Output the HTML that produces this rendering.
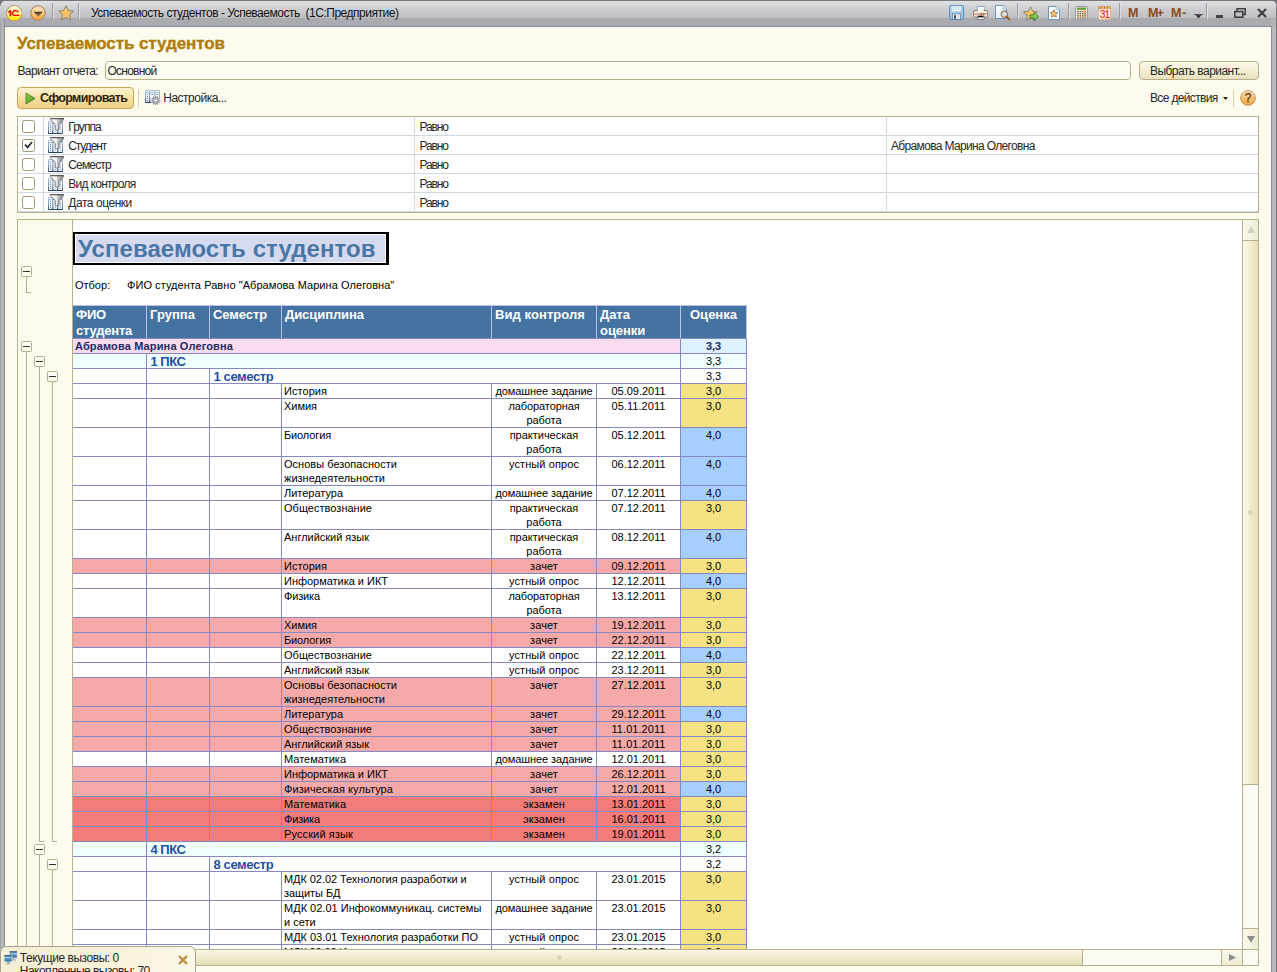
<!DOCTYPE html>
<html><head><meta charset="utf-8"><title>Успеваемость студентов</title>
<style>
html,body{margin:0;padding:0;}
body{width:1277px;height:972px;overflow:hidden;position:relative;background:#fcfbed;font-family:"Liberation Sans",sans-serif;font-size:11px;color:#000;}
div,span{box-sizing:border-box;}
.a{position:absolute;}
.t{position:absolute;white-space:pre;line-height:14px;}
.ui{font-size:11px;color:#1a1a1a;}
.c{position:absolute;overflow:hidden;font-size:11px;line-height:14px;white-space:pre;}
.hl{position:absolute;height:1px;background:#8489c1;}
.vl{position:absolute;width:1px;background:#8489c1;}
.hd{position:absolute;color:#fff;font-weight:bold;font-size:13px;line-height:16px;white-space:pre;}
.gl{position:absolute;background:#b8b08c;}
.mb{position:absolute;width:11px;height:11px;border:1px solid #b5ad88;border-radius:1.5px;background:#fdfcf3;}
.mb:after{content:"";position:absolute;left:1px;top:4px;width:7px;height:1px;background:#3a3420;}
.cb{position:absolute;width:13px;height:13px;border:1px solid #9f9870;border-radius:2.5px;background:#fff;}
</style></head>
<body>
<!-- title bar -->
<div class="a" style="left:0;top:0;width:1277px;height:27px;background:linear-gradient(#77787a 0,#77787a 1px,#dfe0e2 1px,#d6d7d9 5px,#cbcccf 10px,#c3c4c7 15px,#bcbec1 18.5px,#a9abb0 18.5px,#a9abb0 26px);"></div>
<div class="a" style="left:4px;top:26px;width:1268px;height:1px;background:#8c8e93"></div>
<div class="a" style="left:0;top:19px;width:5px;height:953px;background:linear-gradient(90deg,#a3a5a9 0,#a3a5a9 1px,#b5b7bb 1px,#b3b5b9 4px,#8c8e93 4px,#8c8e93 5px);"></div>
<div class="a" style="left:0;top:19px;width:4px;height:8px;background:linear-gradient(90deg,#a3a5a9 0,#a3a5a9 1px,#b1b3b7 1px,#adafb3 4px)"></div>
<div class="a" style="left:1271px;top:19px;width:6px;height:953px;background:linear-gradient(90deg,#8c8e93 0,#8c8e93 1px,#b3b5b9 1px,#b9babe 4px,#b4b5b9 5px,#77787b 5px,#77787b 6px);"></div>
<div class="a" style="left:1271px;top:19px;width:5px;height:7px;background:#aeb0b4"></div>
<div class="a" style="left:0;top:0;width:6px;height:6px;background:radial-gradient(circle at 100% 100%,rgba(112,113,116,0) 5px,#707174 6px)"></div>
<div class="a" style="left:1271px;top:0;width:6px;height:6px;background:radial-gradient(circle at 0 100%,rgba(112,113,116,0) 5px,#707174 6px)"></div>
<div class="a" style="left:1276px;top:6px;width:1px;height:13px;background:#77787b"></div>
<svg class="a" style="left:5.8px;top:4.8px" width="16.6" height="16.6" viewBox="0 0 16.6 16.6"><defs><linearGradient id="l1c" x1="0" y1="0" x2="0" y2="1"><stop offset="0" stop-color="#fffde8"/><stop offset="0.45" stop-color="#fff7a2"/><stop offset="0.7" stop-color="#ffee3a"/><stop offset="1" stop-color="#ffe100"/></linearGradient></defs><circle cx="8.3" cy="8.3" r="7.8" fill="url(#l1c)" stroke="#bd8668" stroke-width="1"/><path d="M2.3 7.4 L4.5 5.6" stroke="#e60000" stroke-width="1.4" fill="none"/><rect x="3.6" y="5.4" width="1.7" height="5.8" fill="#e60000"/><path d="M12.2 7.3 C11.6 5.4 8.6 4.9 7.2 6.6 C6 8 6.3 10 7.9 10.4 H13.5" fill="none" stroke="#e60000" stroke-width="1.4"/><path d="M10.9 7.4 C10.3 6.8 9 6.9 8.5 7.7 C8.1 8.5 8.5 9.2 9.3 9.3" fill="none" stroke="#f0c000" stroke-width="0.5" stroke-dasharray="0.7 0.7"/></svg>
<svg class="a" style="left:30px;top:5.2px" width="16" height="16" viewBox="0 0 16 16"><defs><linearGradient id="db" x1="0" y1="0" x2="0" y2="1"><stop offset="0" stop-color="#fdebd0"/><stop offset="0.5" stop-color="#fac983"/><stop offset="1" stop-color="#f4a23a"/></linearGradient><linearGradient id="dbt" x1="0" y1="0" x2="0" y2="1"><stop offset="0" stop-color="#3e3222"/><stop offset="1" stop-color="#a88658"/></linearGradient></defs><circle cx="8" cy="8" r="7.2" fill="url(#db)" stroke="#b07c48" stroke-width="1"/><path d="M3.7 6.7 H12.7 L8.2 11.8 Z" fill="url(#dbt)"/></svg>
<svg class="a" style="left:57.5px;top:5px" width="16" height="16" viewBox="0 0 16 16"><defs><linearGradient id="st" x1="0" y1="0" x2="0" y2="1"><stop offset="0" stop-color="#fde3a8"/><stop offset="0.55" stop-color="#fbbd58"/><stop offset="1" stop-color="#f7cf8c"/></linearGradient></defs><path d="M8 0.8 L10.2 5.6 L15.4 6.2 L11.5 9.8 L12.6 15 L8 12.4 L3.4 15 L4.5 9.8 L0.6 6.2 L5.8 5.6 Z" fill="url(#st)" stroke="#7d7463" stroke-width="0.9" stroke-linejoin="round"/></svg>
<div class="a" style="left:52px;top:3px;width:1px;height:16px;background:#9b9da2"></div><div class="a" style="left:53px;top:3px;width:1px;height:16px;background:#dcdde0"></div>
<div class="a" style="left:78px;top:3px;width:1px;height:16px;background:#9b9da2"></div><div class="a" style="left:79px;top:3px;width:1px;height:16px;background:#dcdde0"></div>
<div class="t" style="left:91px;top:6px;font-size:12px;line-height:14px;color:#111;letter-spacing:-0.477px;">Успеваемость студентов - Успеваемость  (1С:Предприятие)</div>
<svg class="a" style="left:949px;top:5px" width="15" height="15" viewBox="0 0 15 15"><defs><linearGradient id="sv" x1="0" y1="0" x2="0" y2="1"><stop offset="0" stop-color="#b9d9f1"/><stop offset="1" stop-color="#8fbbe0"/></linearGradient></defs><rect x="0.5" y="0.5" width="14" height="14" rx="1" fill="url(#sv)" stroke="#5b8cb8"/><rect x="3" y="1" width="9" height="5.5" fill="#fff" stroke="#9cc0de" stroke-width="0.6"/><path d="M4 2.8 H11 M4 4.4 H11" stroke="#a6d4e6" stroke-width="0.8"/><rect x="3.5" y="9" width="8" height="5.5" fill="#f4f5f7" stroke="#52708c" stroke-width="0.7"/><rect x="5" y="10.2" width="2" height="3.6" fill="#34495e"/><rect x="7.5" y="9.6" width="3.6" height="4.4" fill="#dfe3e8"/></svg>
<svg class="a" style="left:973px;top:6px" width="15" height="14" viewBox="0 0 15 14"><rect x="4.5" y="0.5" width="6.5" height="5" fill="#fff" stroke="#7fa6cc" stroke-width="0.9"/><path d="M2 4.5 H13.5 Q14.6 4.5 14.6 5.8 V10.2 Q14.6 11.2 13.4 11.2 H2 Q0.6 11.2 0.6 10.2 V5.8 Q0.6 4.5 2 4.5 Z" fill="#f7e9dc" stroke="#8a6a58" stroke-width="0.9"/><rect x="5" y="1.4" width="5.6" height="4" fill="#fbfdff"/><path d="M1.6 8 H13.6" stroke="#b58a6c" stroke-width="1.2"/><rect x="7.6" y="7.3" width="1.5" height="1.5" fill="#e8281c"/><rect x="9.9" y="7.3" width="1.5" height="1.5" fill="#2aa02a"/><rect x="4.4" y="10" width="6.6" height="3.4" fill="#fff" stroke="#6c7078" stroke-width="0.8"/><rect x="5" y="9.8" width="5.4" height="1.6" fill="#111"/></svg>
<svg class="a" style="left:995px;top:5px" width="16" height="16" viewBox="0 0 16 16"><defs><linearGradient id="pv" x1="0" y1="0" x2="1" y2="1"><stop offset="0" stop-color="#fff"/><stop offset="1" stop-color="#d5e6f6"/></linearGradient></defs><path d="M0.5 0.5 H8 L11.5 4 V13.5 H0.5 Z" fill="url(#pv)" stroke="#5e8bb8" stroke-width="0.9"/><path d="M8 0.5 V4 H11.5" fill="#eef5fb" stroke="#7ea3c8" stroke-width="0.7"/><circle cx="9.4" cy="9.2" r="3.1" fill="#cfe3fb" stroke="#a9784a" stroke-width="1.2"/><path d="M11.6 11.6 L14 14.4" stroke="#9a5f2c" stroke-width="2.2" stroke-linecap="round"/></svg>
<div class="a" style="left:1017px;top:3px;width:1px;height:16px;background:#9b9da2"></div><div class="a" style="left:1018px;top:3px;width:1px;height:16px;background:#dcdde0"></div>
<svg class="a" style="left:1023px;top:5.5px" width="16.5" height="16" viewBox="0 0 16.5 16"><defs><linearGradient id="sa" x1="0" y1="0" x2="0" y2="1"><stop offset="0" stop-color="#fde3a8"/><stop offset="0.6" stop-color="#fab850"/><stop offset="1" stop-color="#f7cf8c"/></linearGradient><linearGradient id="ga" x1="0" y1="0" x2="0" y2="1"><stop offset="0" stop-color="#b6e67e"/><stop offset="1" stop-color="#57b02c"/></linearGradient></defs><path d="M8 0.8 L10.2 5.6 L15.4 6.2 L11.5 9.8 L12.6 15 L8 12.4 L3.4 15 L4.5 9.8 L0.6 6.2 L5.8 5.6 Z" fill="url(#sa)" stroke="#7d7463" stroke-width="0.9" stroke-linejoin="round" transform="translate(0,0) scale(0.94)"/><path d="M7 9 H11 V6.3 L15.6 10.6 L11 14.9 V12.2 H7 Z" fill="url(#ga)" stroke="#2f7d1a" stroke-width="0.9" stroke-linejoin="round"/></svg>
<svg class="a" style="left:1048px;top:6px" width="12" height="14" viewBox="0 0 12 14"><path d="M0.5 0.5 H8 L11.5 4 V13.5 H0.5 Z" fill="#fff" stroke="#5e8bb8" stroke-width="0.9"/><path d="M8 0.5 V4 H11.5" fill="#e9f2fb" stroke="#7ea3c8" stroke-width="0.7"/><path d="M8 0.8 L10.2 5.6 L15.4 6.2 L11.5 9.8 L12.6 15 L8 12.4 L3.4 15 L4.5 9.8 L0.6 6.2 L5.8 5.6 Z" fill="#fbc465" stroke="#6e634f" stroke-width="1.3" stroke-linejoin="round" transform="translate(1.6,3.2) scale(0.54)"/></svg>
<div class="a" style="left:1068px;top:3px;width:1px;height:16px;background:#9b9da2"></div><div class="a" style="left:1069px;top:3px;width:1px;height:16px;background:#dcdde0"></div>
<svg class="a" style="left:1075px;top:6px" width="13" height="14" viewBox="0 0 13 14"><defs><linearGradient id="cl" x1="0" y1="0" x2="1" y2="1"><stop offset="0" stop-color="#fef2dc"/><stop offset="1" stop-color="#f8d6a6"/></linearGradient></defs><rect x="0.5" y="0.5" width="12" height="13" rx="0.8" fill="url(#cl)" stroke="#8497aa" stroke-width="0.9"/><rect x="2.2" y="1.9" width="8.6" height="1.7" fill="#5aaa3a" stroke="#3a8424" stroke-width="0.4"/><rect x="2.2" y="5.1" width="1.5" height="1.1" fill="#4a4a48"/><rect x="4.6" y="5.1" width="1.5" height="1.1" fill="#4a4a48"/><rect x="7" y="5.1" width="1.5" height="1.1" fill="#4a4a48"/><rect x="9.4" y="5.1" width="1.5" height="1.1" fill="#e8281c"/><rect x="2.2" y="7.2" width="1.5" height="1.1" fill="#4a4a48"/><rect x="4.6" y="7.2" width="1.5" height="1.1" fill="#4a4a48"/><rect x="7" y="7.2" width="1.5" height="1.1" fill="#4a4a48"/><rect x="9.4" y="7.2" width="1.5" height="1.1" fill="#4a4a48"/><rect x="2.2" y="9.3" width="1.5" height="1.1" fill="#4a4a48"/><rect x="4.6" y="9.3" width="1.5" height="1.1" fill="#4a4a48"/><rect x="7" y="9.3" width="1.5" height="1.1" fill="#4a4a48"/><rect x="9.4" y="9.3" width="1.5" height="1.1" fill="#4a4a48"/><rect x="2.2" y="11.4" width="1.5" height="1.1" fill="#4a4a48"/><rect x="4.6" y="11.4" width="1.5" height="1.1" fill="#4a4a48"/><rect x="7" y="11.4" width="1.5" height="1.1" fill="#4a4a48"/><rect x="9.4" y="11.4" width="1.5" height="1.1" fill="#4a4a48"/></svg>
<svg class="a" style="left:1098px;top:6px" width="13" height="14" viewBox="0 0 13 14"><rect x="0.5" y="0.5" width="12" height="13" fill="#fef4e8" stroke="#d4b890" stroke-width="0.9"/><rect x="0.5" y="0.5" width="12" height="2.4" fill="#eebc70" stroke="#c69758" stroke-width="0.6"/><rect x="2.8" y="1.2" width="1" height="1" fill="#6a4a20"/><rect x="6" y="1.2" width="1" height="1" fill="#6a4a20"/><rect x="9.2" y="1.2" width="1" height="1" fill="#6a4a20"/><text x="6.4" y="12.1" font-family="Liberation Sans" font-size="10" fill="#e8301c" stroke="#e8301c" stroke-width="0.25" text-anchor="middle" letter-spacing="-0.9">31</text></svg>
<div class="a" style="left:1119px;top:3px;width:1px;height:16px;background:#9b9da2"></div><div class="a" style="left:1120px;top:3px;width:1px;height:16px;background:#dcdde0"></div>
<div class="t" style="left:1128px;top:6px;font-size:12.5px;line-height:14px;font-weight:bold;color:#8a4a1e;letter-spacing:-1.413px;">M</div>
<div class="t" style="left:1148px;top:6px;font-size:12.5px;line-height:14px;font-weight:bold;color:#8a4a1e;letter-spacing:-1.713px;">M+</div>
<div class="t" style="left:1171px;top:6px;font-size:12.5px;line-height:14px;font-weight:bold;color:#8a4a1e;letter-spacing:0.924px;">M-</div>
<svg class="a" style="left:1194px;top:14px" width="9" height="5" viewBox="0 0 9 5"><path d="M0 0.5 H9" stroke="#55565a" stroke-width="1"/><path d="M1.5 1 H7.5 L4.5 4.6 Z" fill="#3c3d40"/></svg>
<div class="a" style="left:1206px;top:3px;width:1px;height:16px;background:#9b9da2"></div><div class="a" style="left:1207px;top:3px;width:1px;height:16px;background:#dcdde0"></div>
<div class="a" style="left:1216px;top:15px;width:7px;height:3px;background:#434447"></div>
<svg class="a" style="left:1234.3px;top:8px" width="12" height="10" viewBox="0 0 12 10"><path d="M3 3 V0.8 H11.2 V6.5 H9" fill="none" stroke="#3f4043" stroke-width="1.5"/><rect x="0.8" y="3.6" width="8" height="5.6" fill="none" stroke="#3f4043" stroke-width="1.6"/></svg>
<svg class="a" style="left:1257px;top:8px" width="10" height="10" viewBox="0 0 10 10"><path d="M1 1 L9 9 M9 1 L1 9" stroke="#3f4043" stroke-width="2.2"/></svg>
<div class="t" style="left:17px;top:34px;font-size:17px;line-height:20px;font-weight:bold;color:#b07c0a;letter-spacing:-0.083px;-webkit-text-stroke:0.35px #b07c0a;">Успеваемость студентов</div>
<div class="t" style="left:17.5px;top:64px;font-size:12px;line-height:14px;color:#262626;letter-spacing:-0.642px;">Вариант отчета:</div>
<div class="a" style="left:105px;top:61px;width:1026px;height:19px;border:1px solid #b8b08c;border-radius:4px;background:#fdfcf1"></div>
<div class="t" style="left:107.5px;top:64px;font-size:12px;line-height:14px;color:#262626;letter-spacing:-0.759px;">Основной</div>
<div class="a" style="left:1139px;top:61px;width:120px;height:19px;border:1px solid #b8b08c;border-radius:4px;background:linear-gradient(#fbf8e8,#f3eed4 50%,#e9e2bf)"></div>
<div class="t" style="left:1150px;top:64px;font-size:12px;line-height:14px;color:#262626;letter-spacing:-0.543px;">Выбрать вариант...</div>
<div class="a" style="left:17px;top:87px;width:117px;height:22px;border:1px solid #c9a655;border-radius:4px;background:linear-gradient(#fdf3d3,#f8e0a4 50%,#f0d083)"></div>
<svg class="a" style="left:25px;top:92px" width="11" height="13" viewBox="0 0 11 13"><defs><linearGradient id="pl" x1="0" y1="0" x2="1" y2="1"><stop offset="0" stop-color="#8fd04a"/><stop offset="1" stop-color="#3f9a1c"/></linearGradient></defs><path d="M1 1 L10 6.5 L1 12 Z" fill="url(#pl)" stroke="#4f7f2c" stroke-width="0.9"/></svg>
<div class="t" style="left:40px;top:91px;font-size:12.5px;line-height:14px;font-weight:bold;color:#2a2210;letter-spacing:-0.657px;">Сформировать</div>
<div class="a" style="left:138px;top:90px;width:1px;height:17px;background:#d9cfa8"></div>
<svg class="a" style="left:145px;top:90px" width="16" height="16" viewBox="0 0 16 16"><defs><linearGradient id="sti" x1="0" y1="0" x2="0" y2="1"><stop offset="0" stop-color="#b4c4dc"/><stop offset="0.7" stop-color="#6f8ab0"/><stop offset="1" stop-color="#1c3558"/></linearGradient></defs><rect x="0" y="0" width="15" height="13" rx="1" fill="url(#sti)"/><rect x="1" y="1" width="3" height="1.2" fill="#fff"/><rect x="5.2" y="1" width="3.8" height="1.2" fill="#fff"/><rect x="10.2" y="1" width="3.8" height="1.2" fill="#fff"/><rect x="1" y="3.2" width="3" height="8.6" fill="#f4fcff"/><rect x="5.2" y="3.2" width="3.8" height="8.6" fill="#fff"/><rect x="10.2" y="3.2" width="3.8" height="4" fill="#fff"/><rect x="2" y="4" width="1" height="1" fill="#7276a2"/><rect x="2" y="6" width="1" height="1" fill="#7276a2"/><rect x="2" y="8" width="1" height="1" fill="#7276a2"/><rect x="2" y="10" width="1" height="1" fill="#7276a2"/><rect x="6.4" y="4" width="1.6" height="1" fill="#7276a2"/><rect x="11.2" y="4" width="1.6" height="1" fill="#7276a2"/><g transform="translate(10.6,10.4)"><circle r="4.9" fill="#fcfbed"/><rect x="-0.55" y="-4.7" width="1.1" height="1.7" fill="#8e9098" transform="rotate(0)"/><rect x="-0.55" y="-4.7" width="1.1" height="1.7" fill="#8e9098" transform="rotate(30)"/><rect x="-0.55" y="-4.7" width="1.1" height="1.7" fill="#8e9098" transform="rotate(60)"/><rect x="-0.55" y="-4.7" width="1.1" height="1.7" fill="#8e9098" transform="rotate(90)"/><rect x="-0.55" y="-4.7" width="1.1" height="1.7" fill="#8e9098" transform="rotate(120)"/><rect x="-0.55" y="-4.7" width="1.1" height="1.7" fill="#8e9098" transform="rotate(150)"/><rect x="-0.55" y="-4.7" width="1.1" height="1.7" fill="#8e9098" transform="rotate(180)"/><rect x="-0.55" y="-4.7" width="1.1" height="1.7" fill="#8e9098" transform="rotate(210)"/><rect x="-0.55" y="-4.7" width="1.1" height="1.7" fill="#8e9098" transform="rotate(240)"/><rect x="-0.55" y="-4.7" width="1.1" height="1.7" fill="#8e9098" transform="rotate(270)"/><rect x="-0.55" y="-4.7" width="1.1" height="1.7" fill="#8e9098" transform="rotate(300)"/><rect x="-0.55" y="-4.7" width="1.1" height="1.7" fill="#8e9098" transform="rotate(330)"/><circle r="3.4" fill="#a4a6ae" stroke="#8a8c94" stroke-width="0.5"/><circle r="1.2" fill="#fdfdfd"/></g></svg>
<div class="t" style="left:163.3px;top:91px;font-size:12px;line-height:14px;color:#262626;letter-spacing:-0.507px;">Настройка...</div>
<div class="t" style="left:1150px;top:91px;font-size:12px;line-height:14px;color:#262626;letter-spacing:-0.651px;">Все действия</div>
<svg class="a" style="left:1223px;top:97px" width="5" height="3" viewBox="0 0 5 3"><path d="M0 0 H5 L2.5 3 Z" fill="#2a2210"/></svg>
<div class="a" style="left:1233px;top:90px;width:1px;height:17px;background:#d9cfa8"></div>
<svg class="a" style="left:1240px;top:90px" width="16" height="16" viewBox="0 0 16 16"><defs><linearGradient id="hp" x1="0" y1="0" x2="0" y2="1"><stop offset="0" stop-color="#fdebc8"/><stop offset="0.5" stop-color="#f7c272"/><stop offset="1" stop-color="#efa23c"/></linearGradient></defs><circle cx="8" cy="8" r="7.3" fill="url(#hp)" stroke="#c48f4c" stroke-width="1"/><text x="8.1" y="12.2" font-family="Liberation Sans" font-size="12" fill="#5a3a1a" stroke="#5a3a1a" stroke-width="0.3" text-anchor="middle">?</text></svg>
<!-- filter table -->
<div class="a" style="left:17px;top:116px;width:1242px;height:97px;border:1px solid #b8b08c;background:#fff"></div>
<div class="a" style="left:18px;top:135px;width:1240px;height:1px;background:#d0d9e0"></div>
<div class="a" style="left:18px;top:154px;width:1240px;height:1px;background:#d0d9e0"></div>
<div class="a" style="left:18px;top:173px;width:1240px;height:1px;background:#d0d9e0"></div>
<div class="a" style="left:18px;top:192px;width:1240px;height:1px;background:#d0d9e0"></div>
<div class="a" style="left:18px;top:211px;width:1240px;height:1px;background:#d0d9e0"></div>
<div class="a" style="left:43px;top:117px;width:1px;height:95px;background:#d0d9e0"></div>
<div class="a" style="left:414px;top:117px;width:1px;height:95px;background:#d0d9e0"></div>
<div class="a" style="left:886px;top:117px;width:1px;height:95px;background:#d0d9e0"></div>
<div class="cb" style="left:22px;top:120px"></div><svg class="a" style="left:48px;top:118px" width="16.2" height="16" viewBox="0 0 16.2 16"><defs><linearGradient id="ft0" x1="0" y1="0" x2="0" y2="1"><stop offset="0" stop-color="#b4c4dc"/><stop offset="0.7" stop-color="#6f8ab0"/><stop offset="1" stop-color="#1c3558"/></linearGradient><linearGradient id="fn0" x1="0" y1="0" x2="1" y2="0"><stop offset="0" stop-color="#fff"/><stop offset="0.45" stop-color="#f4f4f4"/><stop offset="0.55" stop-color="#c4c4c4"/><stop offset="1" stop-color="#8c8c8c"/></linearGradient></defs><rect x="0" y="3" width="15" height="13" rx="1" fill="url(#ft0)"/><rect x="1" y="4" width="3" height="1.2" fill="#fff"/><rect x="1" y="6" width="3.2" height="9" fill="#f4fcff"/><rect x="5.4" y="6" width="3.8" height="9" fill="#f4fcff"/><rect x="10.4" y="6" width="3.6" height="9" fill="#f4fcff"/><rect x="2" y="6.8" width="1" height="1" fill="#7276a2"/><rect x="2" y="8.8" width="1" height="1" fill="#7276a2"/><rect x="2" y="10.8" width="1" height="1" fill="#7276a2"/><rect x="2" y="12.8" width="1" height="1" fill="#7276a2"/><rect x="6.8" y="6.8" width="1" height="1" fill="#7276a2"/><rect x="6.8" y="8.8" width="1" height="1" fill="#7276a2"/><rect x="6.8" y="10.8" width="1" height="1" fill="#7276a2"/><rect x="6.8" y="12.8" width="1" height="1" fill="#7276a2"/><rect x="11.7" y="6.8" width="1" height="1" fill="#7276a2"/><rect x="11.7" y="8.8" width="1" height="1" fill="#7276a2"/><rect x="11.7" y="10.8" width="1" height="1" fill="#7276a2"/><rect x="11.7" y="12.8" width="1" height="1" fill="#7276a2"/><path d="M2.3 0.6 H15.7 V1.6 L11 6.6 V11.2 L9 12.2 L7.2 11.2 V6.6 L2.3 1.6 Z" fill="url(#fn0)" stroke="#5a5a5a" stroke-width="0.75" stroke-linejoin="round"/><path d="M2.3 0.7 H15.7" stroke="#484848" stroke-width="0.9"/></svg>
<div class="t" style="left:68.3px;top:120px;font-size:12px;line-height:14px;color:#262626;letter-spacing:-0.927px;">Группа</div>
<div class="t" style="left:419.5px;top:120px;font-size:12px;line-height:14px;color:#262626;letter-spacing:-1.114px;">Равно</div>
<div class="cb" style="left:22px;top:139px"></div><svg class="a" style="left:48px;top:137px" width="16.2" height="16" viewBox="0 0 16.2 16"><defs><linearGradient id="ft1" x1="0" y1="0" x2="0" y2="1"><stop offset="0" stop-color="#b4c4dc"/><stop offset="0.7" stop-color="#6f8ab0"/><stop offset="1" stop-color="#1c3558"/></linearGradient><linearGradient id="fn1" x1="0" y1="0" x2="1" y2="0"><stop offset="0" stop-color="#fff"/><stop offset="0.45" stop-color="#f4f4f4"/><stop offset="0.55" stop-color="#c4c4c4"/><stop offset="1" stop-color="#8c8c8c"/></linearGradient></defs><rect x="0" y="3" width="15" height="13" rx="1" fill="url(#ft1)"/><rect x="1" y="4" width="3" height="1.2" fill="#fff"/><rect x="1" y="6" width="3.2" height="9" fill="#f4fcff"/><rect x="5.4" y="6" width="3.8" height="9" fill="#f4fcff"/><rect x="10.4" y="6" width="3.6" height="9" fill="#f4fcff"/><rect x="2" y="6.8" width="1" height="1" fill="#7276a2"/><rect x="2" y="8.8" width="1" height="1" fill="#7276a2"/><rect x="2" y="10.8" width="1" height="1" fill="#7276a2"/><rect x="2" y="12.8" width="1" height="1" fill="#7276a2"/><rect x="6.8" y="6.8" width="1" height="1" fill="#7276a2"/><rect x="6.8" y="8.8" width="1" height="1" fill="#7276a2"/><rect x="6.8" y="10.8" width="1" height="1" fill="#7276a2"/><rect x="6.8" y="12.8" width="1" height="1" fill="#7276a2"/><rect x="11.7" y="6.8" width="1" height="1" fill="#7276a2"/><rect x="11.7" y="8.8" width="1" height="1" fill="#7276a2"/><rect x="11.7" y="10.8" width="1" height="1" fill="#7276a2"/><rect x="11.7" y="12.8" width="1" height="1" fill="#7276a2"/><path d="M2.3 0.6 H15.7 V1.6 L11 6.6 V11.2 L9 12.2 L7.2 11.2 V6.6 L2.3 1.6 Z" fill="url(#fn1)" stroke="#5a5a5a" stroke-width="0.75" stroke-linejoin="round"/><path d="M2.3 0.7 H15.7" stroke="#484848" stroke-width="0.9"/></svg>
<div class="t" style="left:68.3px;top:139px;font-size:12px;line-height:14px;color:#262626;letter-spacing:-1.117px;">Студент</div>
<div class="t" style="left:419.5px;top:139px;font-size:12px;line-height:14px;color:#262626;letter-spacing:-1.114px;">Равно</div>
<div class="cb" style="left:22px;top:158px"></div><svg class="a" style="left:48px;top:156px" width="16.2" height="16" viewBox="0 0 16.2 16"><defs><linearGradient id="ft2" x1="0" y1="0" x2="0" y2="1"><stop offset="0" stop-color="#b4c4dc"/><stop offset="0.7" stop-color="#6f8ab0"/><stop offset="1" stop-color="#1c3558"/></linearGradient><linearGradient id="fn2" x1="0" y1="0" x2="1" y2="0"><stop offset="0" stop-color="#fff"/><stop offset="0.45" stop-color="#f4f4f4"/><stop offset="0.55" stop-color="#c4c4c4"/><stop offset="1" stop-color="#8c8c8c"/></linearGradient></defs><rect x="0" y="3" width="15" height="13" rx="1" fill="url(#ft2)"/><rect x="1" y="4" width="3" height="1.2" fill="#fff"/><rect x="1" y="6" width="3.2" height="9" fill="#f4fcff"/><rect x="5.4" y="6" width="3.8" height="9" fill="#f4fcff"/><rect x="10.4" y="6" width="3.6" height="9" fill="#f4fcff"/><rect x="2" y="6.8" width="1" height="1" fill="#7276a2"/><rect x="2" y="8.8" width="1" height="1" fill="#7276a2"/><rect x="2" y="10.8" width="1" height="1" fill="#7276a2"/><rect x="2" y="12.8" width="1" height="1" fill="#7276a2"/><rect x="6.8" y="6.8" width="1" height="1" fill="#7276a2"/><rect x="6.8" y="8.8" width="1" height="1" fill="#7276a2"/><rect x="6.8" y="10.8" width="1" height="1" fill="#7276a2"/><rect x="6.8" y="12.8" width="1" height="1" fill="#7276a2"/><rect x="11.7" y="6.8" width="1" height="1" fill="#7276a2"/><rect x="11.7" y="8.8" width="1" height="1" fill="#7276a2"/><rect x="11.7" y="10.8" width="1" height="1" fill="#7276a2"/><rect x="11.7" y="12.8" width="1" height="1" fill="#7276a2"/><path d="M2.3 0.6 H15.7 V1.6 L11 6.6 V11.2 L9 12.2 L7.2 11.2 V6.6 L2.3 1.6 Z" fill="url(#fn2)" stroke="#5a5a5a" stroke-width="0.75" stroke-linejoin="round"/><path d="M2.3 0.7 H15.7" stroke="#484848" stroke-width="0.9"/></svg>
<div class="t" style="left:68.3px;top:158px;font-size:12px;line-height:14px;color:#262626;letter-spacing:-0.839px;">Семестр</div>
<div class="t" style="left:419.5px;top:158px;font-size:12px;line-height:14px;color:#262626;letter-spacing:-1.114px;">Равно</div>
<div class="cb" style="left:22px;top:177px"></div><svg class="a" style="left:48px;top:175px" width="16.2" height="16" viewBox="0 0 16.2 16"><defs><linearGradient id="ft3" x1="0" y1="0" x2="0" y2="1"><stop offset="0" stop-color="#b4c4dc"/><stop offset="0.7" stop-color="#6f8ab0"/><stop offset="1" stop-color="#1c3558"/></linearGradient><linearGradient id="fn3" x1="0" y1="0" x2="1" y2="0"><stop offset="0" stop-color="#fff"/><stop offset="0.45" stop-color="#f4f4f4"/><stop offset="0.55" stop-color="#c4c4c4"/><stop offset="1" stop-color="#8c8c8c"/></linearGradient></defs><rect x="0" y="3" width="15" height="13" rx="1" fill="url(#ft3)"/><rect x="1" y="4" width="3" height="1.2" fill="#fff"/><rect x="1" y="6" width="3.2" height="9" fill="#f4fcff"/><rect x="5.4" y="6" width="3.8" height="9" fill="#f4fcff"/><rect x="10.4" y="6" width="3.6" height="9" fill="#f4fcff"/><rect x="2" y="6.8" width="1" height="1" fill="#7276a2"/><rect x="2" y="8.8" width="1" height="1" fill="#7276a2"/><rect x="2" y="10.8" width="1" height="1" fill="#7276a2"/><rect x="2" y="12.8" width="1" height="1" fill="#7276a2"/><rect x="6.8" y="6.8" width="1" height="1" fill="#7276a2"/><rect x="6.8" y="8.8" width="1" height="1" fill="#7276a2"/><rect x="6.8" y="10.8" width="1" height="1" fill="#7276a2"/><rect x="6.8" y="12.8" width="1" height="1" fill="#7276a2"/><rect x="11.7" y="6.8" width="1" height="1" fill="#7276a2"/><rect x="11.7" y="8.8" width="1" height="1" fill="#7276a2"/><rect x="11.7" y="10.8" width="1" height="1" fill="#7276a2"/><rect x="11.7" y="12.8" width="1" height="1" fill="#7276a2"/><path d="M2.3 0.6 H15.7 V1.6 L11 6.6 V11.2 L9 12.2 L7.2 11.2 V6.6 L2.3 1.6 Z" fill="url(#fn3)" stroke="#5a5a5a" stroke-width="0.75" stroke-linejoin="round"/><path d="M2.3 0.7 H15.7" stroke="#484848" stroke-width="0.9"/></svg>
<div class="t" style="left:68.3px;top:177px;font-size:12px;line-height:14px;color:#262626;letter-spacing:-0.710px;">Вид контроля</div>
<div class="t" style="left:419.5px;top:177px;font-size:12px;line-height:14px;color:#262626;letter-spacing:-1.114px;">Равно</div>
<div class="cb" style="left:22px;top:196px"></div><svg class="a" style="left:48px;top:194px" width="16.2" height="16" viewBox="0 0 16.2 16"><defs><linearGradient id="ft4" x1="0" y1="0" x2="0" y2="1"><stop offset="0" stop-color="#b4c4dc"/><stop offset="0.7" stop-color="#6f8ab0"/><stop offset="1" stop-color="#1c3558"/></linearGradient><linearGradient id="fn4" x1="0" y1="0" x2="1" y2="0"><stop offset="0" stop-color="#fff"/><stop offset="0.45" stop-color="#f4f4f4"/><stop offset="0.55" stop-color="#c4c4c4"/><stop offset="1" stop-color="#8c8c8c"/></linearGradient></defs><rect x="0" y="3" width="15" height="13" rx="1" fill="url(#ft4)"/><rect x="1" y="4" width="3" height="1.2" fill="#fff"/><rect x="1" y="6" width="3.2" height="9" fill="#f4fcff"/><rect x="5.4" y="6" width="3.8" height="9" fill="#f4fcff"/><rect x="10.4" y="6" width="3.6" height="9" fill="#f4fcff"/><rect x="2" y="6.8" width="1" height="1" fill="#7276a2"/><rect x="2" y="8.8" width="1" height="1" fill="#7276a2"/><rect x="2" y="10.8" width="1" height="1" fill="#7276a2"/><rect x="2" y="12.8" width="1" height="1" fill="#7276a2"/><rect x="6.8" y="6.8" width="1" height="1" fill="#7276a2"/><rect x="6.8" y="8.8" width="1" height="1" fill="#7276a2"/><rect x="6.8" y="10.8" width="1" height="1" fill="#7276a2"/><rect x="6.8" y="12.8" width="1" height="1" fill="#7276a2"/><rect x="11.7" y="6.8" width="1" height="1" fill="#7276a2"/><rect x="11.7" y="8.8" width="1" height="1" fill="#7276a2"/><rect x="11.7" y="10.8" width="1" height="1" fill="#7276a2"/><rect x="11.7" y="12.8" width="1" height="1" fill="#7276a2"/><path d="M2.3 0.6 H15.7 V1.6 L11 6.6 V11.2 L9 12.2 L7.2 11.2 V6.6 L2.3 1.6 Z" fill="url(#fn4)" stroke="#5a5a5a" stroke-width="0.75" stroke-linejoin="round"/><path d="M2.3 0.7 H15.7" stroke="#484848" stroke-width="0.9"/></svg>
<div class="t" style="left:68.3px;top:196px;font-size:12px;line-height:14px;color:#262626;letter-spacing:-0.457px;">Дата оценки</div>
<div class="t" style="left:419.5px;top:196px;font-size:12px;line-height:14px;color:#262626;letter-spacing:-1.114px;">Равно</div>
<div class="t" style="left:891px;top:139px;font-size:12px;line-height:14px;color:#262626;letter-spacing:-0.659px;">Абрамова Марина Олеговна</div>
<svg class="a" style="left:24px;top:141px" width="9" height="8" viewBox="0 0 9 8"><path d="M1 3.6 L3.6 6.4 L8 1" fill="none" stroke="#2a2a2a" stroke-width="1.7"/></svg>
<!-- report pane -->
<div class="a" style="left:17px;top:219px;width:1242px;height:747px;border:1px solid #b8b08c;background:#fff"></div>
<div class="a" style="left:18px;top:220px;width:54px;height:729px;background:#fbfaec"></div>
<div class="a" style="left:72px;top:220px;width:1px;height:729px;background:#b8b08c"></div>
<div class="a" style="left:73px;top:232px;width:316px;height:33px;border:2px solid #000;border-right-width:3px;background:#d6daef;box-shadow:inset 0 0 0 1px #fff"></div>
<div class="t" style="left:78px;top:235px;font-size:24px;line-height:28px;font-weight:bold;color:#4a76a6;letter-spacing:0.07px">Успеваемость студентов</div>
<div class="t" style="left:75px;top:278px;font-size:11px;letter-spacing:-0.031px;">Отбор:</div>
<div class="t" style="left:127px;top:278px;font-size:11px;letter-spacing:0.06px">ФИО студента Равно "Абрамова Марина Олеговна"</div>
<div class="a" style="left:73px;top:305px;width:674px;height:33px;background:#4573a1"></div>
<div class="a" style="left:73px;top:305px;width:674px;height:1px;background:#bcc3e8"></div>
<div class="a" style="left:146px;top:305px;width:1px;height:33px;background:#bcc3e8"></div><div class="a" style="left:209px;top:305px;width:1px;height:33px;background:#bcc3e8"></div><div class="a" style="left:281px;top:305px;width:1px;height:33px;background:#bcc3e8"></div><div class="a" style="left:491px;top:305px;width:1px;height:33px;background:#bcc3e8"></div><div class="a" style="left:596px;top:305px;width:1px;height:33px;background:#bcc3e8"></div><div class="a" style="left:680px;top:305px;width:1px;height:33px;background:#bcc3e8"></div><div class="a" style="left:746px;top:305px;width:1px;height:33px;background:#bcc3e8"></div>
<div class="hd" style="left:76px;top:307px;width:70px;letter-spacing:-0.210px;">ФИО<br>студента</div><div class="hd" style="left:150px;top:307px;width:59px;letter-spacing:0.032px;">Группа</div><div class="hd" style="left:213px;top:307px;width:68px;letter-spacing:-0.094px;">Семестр</div><div class="hd" style="left:285px;top:307px;width:206px;letter-spacing:-0.065px;">Дисциплина</div><div class="hd" style="left:495px;top:307px;width:101px;letter-spacing:0.072px;">Вид контроля</div><div class="hd" style="left:600px;top:307px;width:80px;letter-spacing:-0.060px;">Дата<br>оценки</div><div class="hd" style="left:681px;top:307px;width:65px;text-align:center;letter-spacing:0.013px;">Оценка</div>
<div class="a" style="left:73px;top:338px;width:674px;height:611px;overflow:hidden">
<div class="c" style="left:0px;top:1px;width:607px;height:14px;background:#fadcee;font-weight:bold;color:#1f2a63;padding-left:2px;letter-spacing:0.138px;">Абрамова Марина Олеговна</div><div class="c" style="left:608px;top:1px;width:65px;height:14px;background:#ddf1ff;text-align:center;font-weight:bold;color:#1f2a63;letter-spacing:-0.097px;">3,3</div><div class="hl" style="left:0px;top:0px;width:674px;background:#8489c1"></div><div class="vl" style="left:607px;top:0px;height:15px;background:#8489c1"></div><div class="vl" style="left:673px;top:0px;height:15px;background:#8489c1"></div>
<div class="c" style="left:0px;top:16px;width:607px;height:14px;background:#efffff;"></div><div class="c" style="left:74px;top:17px;width:200px;height:13px;background:transparent;font-weight:bold;font-size:13px;color:#1f4e9c;padding-left:3.5px;letter-spacing:-0.509px">1 ПКС</div><div class="c" style="left:608px;top:16px;width:65px;height:14px;background:#efffff;text-align:center;letter-spacing:-0.097px;">3,3</div><div class="hl" style="left:0px;top:15px;width:674px;background:#8489c1"></div><div class="vl" style="left:73px;top:15px;height:15px;background:#8489c1"></div><div class="vl" style="left:607px;top:15px;height:15px;background:#8489c1"></div><div class="vl" style="left:673px;top:15px;height:15px;background:#8489c1"></div>
<div class="c" style="left:0px;top:31px;width:607px;height:14px;background:#fff;"></div><div class="c" style="left:137px;top:32px;width:200px;height:13px;background:transparent;font-weight:bold;font-size:13px;color:#1f4e9c;padding-left:3.5px;letter-spacing:-0.381px">1 семестр</div><div class="c" style="left:608px;top:31px;width:65px;height:14px;background:#fff;text-align:center;letter-spacing:-0.097px;">3,3</div><div class="hl" style="left:0px;top:30px;width:674px;background:#8489c1"></div><div class="vl" style="left:73px;top:30px;height:15px;background:#8489c1"></div><div class="vl" style="left:136px;top:30px;height:15px;background:#8489c1"></div><div class="vl" style="left:607px;top:30px;height:15px;background:#8489c1"></div><div class="vl" style="left:673px;top:30px;height:15px;background:#8489c1"></div>
<div class="c" style="left:0px;top:46px;width:607px;height:14px;background:#fff;"></div><div class="c" style="left:209px;top:46px;width:209px;height:14px;background:transparent;padding-left:2px;letter-spacing:0.049px;">История</div><div class="c" style="left:419px;top:46px;width:104px;height:14px;background:transparent;text-align:center;letter-spacing:-0.090px;">домашнее задание</div><div class="c" style="left:524px;top:46px;width:83px;height:14px;background:transparent;text-align:center;letter-spacing:-0.024px;">05.09.2011</div><div class="c" style="left:608px;top:46px;width:65px;height:14px;background:#f5e283;text-align:center;letter-spacing:-0.097px;">3,0</div><div class="hl" style="left:0px;top:45px;width:674px;background:#8489c1"></div><div class="vl" style="left:73px;top:45px;height:15px;background:#8489c1"></div><div class="vl" style="left:136px;top:45px;height:15px;background:#8489c1"></div><div class="vl" style="left:208px;top:45px;height:15px;background:#8489c1"></div><div class="vl" style="left:418px;top:45px;height:15px;background:#8489c1"></div><div class="vl" style="left:523px;top:45px;height:15px;background:#8489c1"></div><div class="vl" style="left:607px;top:45px;height:15px;background:#8489c1"></div><div class="vl" style="left:673px;top:45px;height:15px;background:#8489c1"></div>
<div class="c" style="left:0px;top:61px;width:607px;height:28px;background:#fff;"></div><div class="c" style="left:209px;top:61px;width:209px;height:28px;background:transparent;padding-left:2px;letter-spacing:-0.029px;">Химия</div><div class="c" style="left:419px;top:61px;width:104px;height:28px;background:transparent;text-align:center;letter-spacing:-0.094px;">лабораторная<br>работа</div><div class="c" style="left:524px;top:61px;width:83px;height:28px;background:transparent;text-align:center;letter-spacing:0.058px;">05.11.2011</div><div class="c" style="left:608px;top:61px;width:65px;height:28px;background:#f5e283;text-align:center;letter-spacing:-0.097px;">3,0</div><div class="hl" style="left:0px;top:60px;width:674px;background:#8489c1"></div><div class="vl" style="left:73px;top:60px;height:29px;background:#8489c1"></div><div class="vl" style="left:136px;top:60px;height:29px;background:#8489c1"></div><div class="vl" style="left:208px;top:60px;height:29px;background:#8489c1"></div><div class="vl" style="left:418px;top:60px;height:29px;background:#8489c1"></div><div class="vl" style="left:523px;top:60px;height:29px;background:#8489c1"></div><div class="vl" style="left:607px;top:60px;height:29px;background:#8489c1"></div><div class="vl" style="left:673px;top:60px;height:29px;background:#8489c1"></div>
<div class="c" style="left:0px;top:90px;width:607px;height:28px;background:#fff;"></div><div class="c" style="left:209px;top:90px;width:209px;height:28px;background:transparent;padding-left:2px;letter-spacing:-0.127px;">Биология</div><div class="c" style="left:419px;top:90px;width:104px;height:28px;background:transparent;text-align:center;letter-spacing:-0.013px;">практическая<br>работа</div><div class="c" style="left:524px;top:90px;width:83px;height:28px;background:transparent;text-align:center;letter-spacing:-0.024px;">05.12.2011</div><div class="c" style="left:608px;top:90px;width:65px;height:28px;background:#a6cfff;text-align:center;letter-spacing:-0.097px;">4,0</div><div class="hl" style="left:0px;top:89px;width:674px;background:#8489c1"></div><div class="vl" style="left:73px;top:89px;height:29px;background:#8489c1"></div><div class="vl" style="left:136px;top:89px;height:29px;background:#8489c1"></div><div class="vl" style="left:208px;top:89px;height:29px;background:#8489c1"></div><div class="vl" style="left:418px;top:89px;height:29px;background:#8489c1"></div><div class="vl" style="left:523px;top:89px;height:29px;background:#8489c1"></div><div class="vl" style="left:607px;top:89px;height:29px;background:#8489c1"></div><div class="vl" style="left:673px;top:89px;height:29px;background:#8489c1"></div>
<div class="c" style="left:0px;top:119px;width:607px;height:28px;background:#fff;"></div><div class="c" style="left:209px;top:119px;width:209px;height:28px;background:transparent;padding-left:2px;letter-spacing:0.020px;">Основы безопасности<br>жизнедеятельности</div><div class="c" style="left:419px;top:119px;width:104px;height:28px;background:transparent;text-align:center;letter-spacing:0.091px;">устный опрос</div><div class="c" style="left:524px;top:119px;width:83px;height:28px;background:transparent;text-align:center;letter-spacing:-0.024px;">06.12.2011</div><div class="c" style="left:608px;top:119px;width:65px;height:28px;background:#a6cfff;text-align:center;letter-spacing:-0.097px;">4,0</div><div class="hl" style="left:0px;top:118px;width:674px;background:#8489c1"></div><div class="vl" style="left:73px;top:118px;height:29px;background:#8489c1"></div><div class="vl" style="left:136px;top:118px;height:29px;background:#8489c1"></div><div class="vl" style="left:208px;top:118px;height:29px;background:#8489c1"></div><div class="vl" style="left:418px;top:118px;height:29px;background:#8489c1"></div><div class="vl" style="left:523px;top:118px;height:29px;background:#8489c1"></div><div class="vl" style="left:607px;top:118px;height:29px;background:#8489c1"></div><div class="vl" style="left:673px;top:118px;height:29px;background:#8489c1"></div>
<div class="c" style="left:0px;top:148px;width:607px;height:14px;background:#fff;"></div><div class="c" style="left:209px;top:148px;width:209px;height:14px;background:transparent;padding-left:2px;letter-spacing:-0.016px;">Литература</div><div class="c" style="left:419px;top:148px;width:104px;height:14px;background:transparent;text-align:center;letter-spacing:-0.090px;">домашнее задание</div><div class="c" style="left:524px;top:148px;width:83px;height:14px;background:transparent;text-align:center;letter-spacing:-0.024px;">07.12.2011</div><div class="c" style="left:608px;top:148px;width:65px;height:14px;background:#a6cfff;text-align:center;letter-spacing:-0.097px;">4,0</div><div class="hl" style="left:0px;top:147px;width:674px;background:#8489c1"></div><div class="vl" style="left:73px;top:147px;height:15px;background:#8489c1"></div><div class="vl" style="left:136px;top:147px;height:15px;background:#8489c1"></div><div class="vl" style="left:208px;top:147px;height:15px;background:#8489c1"></div><div class="vl" style="left:418px;top:147px;height:15px;background:#8489c1"></div><div class="vl" style="left:523px;top:147px;height:15px;background:#8489c1"></div><div class="vl" style="left:607px;top:147px;height:15px;background:#8489c1"></div><div class="vl" style="left:673px;top:147px;height:15px;background:#8489c1"></div>
<div class="c" style="left:0px;top:163px;width:607px;height:28px;background:#fff;"></div><div class="c" style="left:209px;top:163px;width:209px;height:28px;background:transparent;padding-left:2px;letter-spacing:0.020px;">Обществознание</div><div class="c" style="left:419px;top:163px;width:104px;height:28px;background:transparent;text-align:center;letter-spacing:-0.013px;">практическая<br>работа</div><div class="c" style="left:524px;top:163px;width:83px;height:28px;background:transparent;text-align:center;letter-spacing:-0.024px;">07.12.2011</div><div class="c" style="left:608px;top:163px;width:65px;height:28px;background:#f5e283;text-align:center;letter-spacing:-0.097px;">3,0</div><div class="hl" style="left:0px;top:162px;width:674px;background:#8489c1"></div><div class="vl" style="left:73px;top:162px;height:29px;background:#8489c1"></div><div class="vl" style="left:136px;top:162px;height:29px;background:#8489c1"></div><div class="vl" style="left:208px;top:162px;height:29px;background:#8489c1"></div><div class="vl" style="left:418px;top:162px;height:29px;background:#8489c1"></div><div class="vl" style="left:523px;top:162px;height:29px;background:#8489c1"></div><div class="vl" style="left:607px;top:162px;height:29px;background:#8489c1"></div><div class="vl" style="left:673px;top:162px;height:29px;background:#8489c1"></div>
<div class="c" style="left:0px;top:192px;width:607px;height:28px;background:#fff;"></div><div class="c" style="left:209px;top:192px;width:209px;height:28px;background:transparent;padding-left:2px;letter-spacing:-0.018px;">Английский язык</div><div class="c" style="left:419px;top:192px;width:104px;height:28px;background:transparent;text-align:center;letter-spacing:-0.013px;">практическая<br>работа</div><div class="c" style="left:524px;top:192px;width:83px;height:28px;background:transparent;text-align:center;letter-spacing:-0.024px;">08.12.2011</div><div class="c" style="left:608px;top:192px;width:65px;height:28px;background:#a6cfff;text-align:center;letter-spacing:-0.097px;">4,0</div><div class="hl" style="left:0px;top:191px;width:674px;background:#8489c1"></div><div class="vl" style="left:73px;top:191px;height:29px;background:#8489c1"></div><div class="vl" style="left:136px;top:191px;height:29px;background:#8489c1"></div><div class="vl" style="left:208px;top:191px;height:29px;background:#8489c1"></div><div class="vl" style="left:418px;top:191px;height:29px;background:#8489c1"></div><div class="vl" style="left:523px;top:191px;height:29px;background:#8489c1"></div><div class="vl" style="left:607px;top:191px;height:29px;background:#8489c1"></div><div class="vl" style="left:673px;top:191px;height:29px;background:#8489c1"></div>
<div class="c" style="left:0px;top:221px;width:607px;height:14px;background:#f5a9a8;"></div><div class="c" style="left:209px;top:221px;width:209px;height:14px;background:transparent;padding-left:2px;letter-spacing:0.049px;">История</div><div class="c" style="left:419px;top:221px;width:104px;height:14px;background:transparent;text-align:center;letter-spacing:0.112px;">зачет</div><div class="c" style="left:524px;top:221px;width:83px;height:14px;background:transparent;text-align:center;letter-spacing:-0.024px;">09.12.2011</div><div class="c" style="left:608px;top:221px;width:65px;height:14px;background:#f5e283;text-align:center;letter-spacing:-0.097px;">3,0</div><div class="hl" style="left:0px;top:220px;width:674px;background:#8489c1"></div><div class="vl" style="left:73px;top:220px;height:15px;background:#8489c1"></div><div class="vl" style="left:136px;top:220px;height:15px;background:#8489c1"></div><div class="vl" style="left:208px;top:220px;height:15px;background:#8489c1"></div><div class="vl" style="left:418px;top:220px;height:15px;background:#8489c1"></div><div class="vl" style="left:523px;top:220px;height:15px;background:#8489c1"></div><div class="vl" style="left:607px;top:220px;height:15px;background:#8489c1"></div><div class="vl" style="left:673px;top:220px;height:15px;background:#8489c1"></div>
<div class="c" style="left:0px;top:236px;width:607px;height:14px;background:#fff;"></div><div class="c" style="left:209px;top:236px;width:209px;height:14px;background:transparent;padding-left:2px;letter-spacing:-0.021px;">Информатика и ИКТ</div><div class="c" style="left:419px;top:236px;width:104px;height:14px;background:transparent;text-align:center;letter-spacing:0.091px;">устный опрос</div><div class="c" style="left:524px;top:236px;width:83px;height:14px;background:transparent;text-align:center;letter-spacing:-0.024px;">12.12.2011</div><div class="c" style="left:608px;top:236px;width:65px;height:14px;background:#a6cfff;text-align:center;letter-spacing:-0.097px;">4,0</div><div class="hl" style="left:0px;top:235px;width:674px;background:#8489c1"></div><div class="vl" style="left:73px;top:235px;height:15px;background:#8489c1"></div><div class="vl" style="left:136px;top:235px;height:15px;background:#8489c1"></div><div class="vl" style="left:208px;top:235px;height:15px;background:#8489c1"></div><div class="vl" style="left:418px;top:235px;height:15px;background:#8489c1"></div><div class="vl" style="left:523px;top:235px;height:15px;background:#8489c1"></div><div class="vl" style="left:607px;top:235px;height:15px;background:#8489c1"></div><div class="vl" style="left:673px;top:235px;height:15px;background:#8489c1"></div>
<div class="c" style="left:0px;top:251px;width:607px;height:28px;background:#fff;"></div><div class="c" style="left:209px;top:251px;width:209px;height:28px;background:transparent;padding-left:2px;letter-spacing:-0.145px;">Физика</div><div class="c" style="left:419px;top:251px;width:104px;height:28px;background:transparent;text-align:center;letter-spacing:-0.094px;">лабораторная<br>работа</div><div class="c" style="left:524px;top:251px;width:83px;height:28px;background:transparent;text-align:center;letter-spacing:-0.024px;">13.12.2011</div><div class="c" style="left:608px;top:251px;width:65px;height:28px;background:#f5e283;text-align:center;letter-spacing:-0.097px;">3,0</div><div class="hl" style="left:0px;top:250px;width:674px;background:#8489c1"></div><div class="vl" style="left:73px;top:250px;height:29px;background:#8489c1"></div><div class="vl" style="left:136px;top:250px;height:29px;background:#8489c1"></div><div class="vl" style="left:208px;top:250px;height:29px;background:#8489c1"></div><div class="vl" style="left:418px;top:250px;height:29px;background:#8489c1"></div><div class="vl" style="left:523px;top:250px;height:29px;background:#8489c1"></div><div class="vl" style="left:607px;top:250px;height:29px;background:#8489c1"></div><div class="vl" style="left:673px;top:250px;height:29px;background:#8489c1"></div>
<div class="c" style="left:0px;top:280px;width:607px;height:14px;background:#f5a9a8;"></div><div class="c" style="left:209px;top:280px;width:209px;height:14px;background:transparent;padding-left:2px;letter-spacing:-0.029px;">Химия</div><div class="c" style="left:419px;top:280px;width:104px;height:14px;background:transparent;text-align:center;letter-spacing:0.112px;">зачет</div><div class="c" style="left:524px;top:280px;width:83px;height:14px;background:transparent;text-align:center;letter-spacing:-0.024px;">19.12.2011</div><div class="c" style="left:608px;top:280px;width:65px;height:14px;background:#f5e283;text-align:center;letter-spacing:-0.097px;">3,0</div><div class="hl" style="left:0px;top:279px;width:674px;background:#8489c1"></div><div class="vl" style="left:73px;top:279px;height:15px;background:#8489c1"></div><div class="vl" style="left:136px;top:279px;height:15px;background:#8489c1"></div><div class="vl" style="left:208px;top:279px;height:15px;background:#8489c1"></div><div class="vl" style="left:418px;top:279px;height:15px;background:#8489c1"></div><div class="vl" style="left:523px;top:279px;height:15px;background:#8489c1"></div><div class="vl" style="left:607px;top:279px;height:15px;background:#8489c1"></div><div class="vl" style="left:673px;top:279px;height:15px;background:#8489c1"></div>
<div class="c" style="left:0px;top:295px;width:607px;height:14px;background:#f5a9a8;"></div><div class="c" style="left:209px;top:295px;width:209px;height:14px;background:transparent;padding-left:2px;letter-spacing:-0.127px;">Биология</div><div class="c" style="left:419px;top:295px;width:104px;height:14px;background:transparent;text-align:center;letter-spacing:0.112px;">зачет</div><div class="c" style="left:524px;top:295px;width:83px;height:14px;background:transparent;text-align:center;letter-spacing:-0.024px;">22.12.2011</div><div class="c" style="left:608px;top:295px;width:65px;height:14px;background:#f5e283;text-align:center;letter-spacing:-0.097px;">3,0</div><div class="hl" style="left:0px;top:294px;width:674px;background:#8489c1"></div><div class="vl" style="left:73px;top:294px;height:15px;background:#8489c1"></div><div class="vl" style="left:136px;top:294px;height:15px;background:#8489c1"></div><div class="vl" style="left:208px;top:294px;height:15px;background:#8489c1"></div><div class="vl" style="left:418px;top:294px;height:15px;background:#8489c1"></div><div class="vl" style="left:523px;top:294px;height:15px;background:#8489c1"></div><div class="vl" style="left:607px;top:294px;height:15px;background:#8489c1"></div><div class="vl" style="left:673px;top:294px;height:15px;background:#8489c1"></div>
<div class="c" style="left:0px;top:310px;width:607px;height:14px;background:#fff;"></div><div class="c" style="left:209px;top:310px;width:209px;height:14px;background:transparent;padding-left:2px;letter-spacing:0.020px;">Обществознание</div><div class="c" style="left:419px;top:310px;width:104px;height:14px;background:transparent;text-align:center;letter-spacing:0.091px;">устный опрос</div><div class="c" style="left:524px;top:310px;width:83px;height:14px;background:transparent;text-align:center;letter-spacing:-0.024px;">22.12.2011</div><div class="c" style="left:608px;top:310px;width:65px;height:14px;background:#a6cfff;text-align:center;letter-spacing:-0.097px;">4,0</div><div class="hl" style="left:0px;top:309px;width:674px;background:#8489c1"></div><div class="vl" style="left:73px;top:309px;height:15px;background:#8489c1"></div><div class="vl" style="left:136px;top:309px;height:15px;background:#8489c1"></div><div class="vl" style="left:208px;top:309px;height:15px;background:#8489c1"></div><div class="vl" style="left:418px;top:309px;height:15px;background:#8489c1"></div><div class="vl" style="left:523px;top:309px;height:15px;background:#8489c1"></div><div class="vl" style="left:607px;top:309px;height:15px;background:#8489c1"></div><div class="vl" style="left:673px;top:309px;height:15px;background:#8489c1"></div>
<div class="c" style="left:0px;top:325px;width:607px;height:14px;background:#fff;"></div><div class="c" style="left:209px;top:325px;width:209px;height:14px;background:transparent;padding-left:2px;letter-spacing:-0.018px;">Английский язык</div><div class="c" style="left:419px;top:325px;width:104px;height:14px;background:transparent;text-align:center;letter-spacing:0.091px;">устный опрос</div><div class="c" style="left:524px;top:325px;width:83px;height:14px;background:transparent;text-align:center;letter-spacing:-0.024px;">23.12.2011</div><div class="c" style="left:608px;top:325px;width:65px;height:14px;background:#f5e283;text-align:center;letter-spacing:-0.097px;">3,0</div><div class="hl" style="left:0px;top:324px;width:674px;background:#8489c1"></div><div class="vl" style="left:73px;top:324px;height:15px;background:#8489c1"></div><div class="vl" style="left:136px;top:324px;height:15px;background:#8489c1"></div><div class="vl" style="left:208px;top:324px;height:15px;background:#8489c1"></div><div class="vl" style="left:418px;top:324px;height:15px;background:#8489c1"></div><div class="vl" style="left:523px;top:324px;height:15px;background:#8489c1"></div><div class="vl" style="left:607px;top:324px;height:15px;background:#8489c1"></div><div class="vl" style="left:673px;top:324px;height:15px;background:#8489c1"></div>
<div class="c" style="left:0px;top:340px;width:607px;height:28px;background:#f5a9a8;"></div><div class="c" style="left:209px;top:340px;width:209px;height:28px;background:transparent;padding-left:2px;letter-spacing:0.020px;">Основы безопасности<br>жизнедеятельности</div><div class="c" style="left:419px;top:340px;width:104px;height:28px;background:transparent;text-align:center;letter-spacing:0.112px;">зачет</div><div class="c" style="left:524px;top:340px;width:83px;height:28px;background:transparent;text-align:center;letter-spacing:-0.024px;">27.12.2011</div><div class="c" style="left:608px;top:340px;width:65px;height:28px;background:#f5e283;text-align:center;letter-spacing:-0.097px;">3,0</div><div class="hl" style="left:0px;top:339px;width:674px;background:#8489c1"></div><div class="vl" style="left:73px;top:339px;height:29px;background:#8489c1"></div><div class="vl" style="left:136px;top:339px;height:29px;background:#8489c1"></div><div class="vl" style="left:208px;top:339px;height:29px;background:#8489c1"></div><div class="vl" style="left:418px;top:339px;height:29px;background:#8489c1"></div><div class="vl" style="left:523px;top:339px;height:29px;background:#8489c1"></div><div class="vl" style="left:607px;top:339px;height:29px;background:#8489c1"></div><div class="vl" style="left:673px;top:339px;height:29px;background:#8489c1"></div>
<div class="c" style="left:0px;top:369px;width:607px;height:14px;background:#f5a9a8;"></div><div class="c" style="left:209px;top:369px;width:209px;height:14px;background:transparent;padding-left:2px;letter-spacing:-0.016px;">Литература</div><div class="c" style="left:419px;top:369px;width:104px;height:14px;background:transparent;text-align:center;letter-spacing:0.112px;">зачет</div><div class="c" style="left:524px;top:369px;width:83px;height:14px;background:transparent;text-align:center;letter-spacing:-0.024px;">29.12.2011</div><div class="c" style="left:608px;top:369px;width:65px;height:14px;background:#a6cfff;text-align:center;letter-spacing:-0.097px;">4,0</div><div class="hl" style="left:0px;top:368px;width:674px;background:#8489c1"></div><div class="vl" style="left:73px;top:368px;height:15px;background:#8489c1"></div><div class="vl" style="left:136px;top:368px;height:15px;background:#8489c1"></div><div class="vl" style="left:208px;top:368px;height:15px;background:#8489c1"></div><div class="vl" style="left:418px;top:368px;height:15px;background:#8489c1"></div><div class="vl" style="left:523px;top:368px;height:15px;background:#8489c1"></div><div class="vl" style="left:607px;top:368px;height:15px;background:#8489c1"></div><div class="vl" style="left:673px;top:368px;height:15px;background:#8489c1"></div>
<div class="c" style="left:0px;top:384px;width:607px;height:14px;background:#f5a9a8;"></div><div class="c" style="left:209px;top:384px;width:209px;height:14px;background:transparent;padding-left:2px;letter-spacing:0.020px;">Обществознание</div><div class="c" style="left:419px;top:384px;width:104px;height:14px;background:transparent;text-align:center;letter-spacing:0.112px;">зачет</div><div class="c" style="left:524px;top:384px;width:83px;height:14px;background:transparent;text-align:center;letter-spacing:0.058px;">11.01.2011</div><div class="c" style="left:608px;top:384px;width:65px;height:14px;background:#f5e283;text-align:center;letter-spacing:-0.097px;">3,0</div><div class="hl" style="left:0px;top:383px;width:674px;background:#8489c1"></div><div class="vl" style="left:73px;top:383px;height:15px;background:#8489c1"></div><div class="vl" style="left:136px;top:383px;height:15px;background:#8489c1"></div><div class="vl" style="left:208px;top:383px;height:15px;background:#8489c1"></div><div class="vl" style="left:418px;top:383px;height:15px;background:#8489c1"></div><div class="vl" style="left:523px;top:383px;height:15px;background:#8489c1"></div><div class="vl" style="left:607px;top:383px;height:15px;background:#8489c1"></div><div class="vl" style="left:673px;top:383px;height:15px;background:#8489c1"></div>
<div class="c" style="left:0px;top:399px;width:607px;height:14px;background:#f5a9a8;"></div><div class="c" style="left:209px;top:399px;width:209px;height:14px;background:transparent;padding-left:2px;letter-spacing:-0.018px;">Английский язык</div><div class="c" style="left:419px;top:399px;width:104px;height:14px;background:transparent;text-align:center;letter-spacing:0.112px;">зачет</div><div class="c" style="left:524px;top:399px;width:83px;height:14px;background:transparent;text-align:center;letter-spacing:0.058px;">11.01.2011</div><div class="c" style="left:608px;top:399px;width:65px;height:14px;background:#f5e283;text-align:center;letter-spacing:-0.097px;">3,0</div><div class="hl" style="left:0px;top:398px;width:674px;background:#8489c1"></div><div class="vl" style="left:73px;top:398px;height:15px;background:#8489c1"></div><div class="vl" style="left:136px;top:398px;height:15px;background:#8489c1"></div><div class="vl" style="left:208px;top:398px;height:15px;background:#8489c1"></div><div class="vl" style="left:418px;top:398px;height:15px;background:#8489c1"></div><div class="vl" style="left:523px;top:398px;height:15px;background:#8489c1"></div><div class="vl" style="left:607px;top:398px;height:15px;background:#8489c1"></div><div class="vl" style="left:673px;top:398px;height:15px;background:#8489c1"></div>
<div class="c" style="left:0px;top:414px;width:607px;height:14px;background:#fff;"></div><div class="c" style="left:209px;top:414px;width:209px;height:14px;background:transparent;padding-left:2px;letter-spacing:0.001px;">Математика</div><div class="c" style="left:419px;top:414px;width:104px;height:14px;background:transparent;text-align:center;letter-spacing:-0.090px;">домашнее задание</div><div class="c" style="left:524px;top:414px;width:83px;height:14px;background:transparent;text-align:center;letter-spacing:-0.024px;">12.01.2011</div><div class="c" style="left:608px;top:414px;width:65px;height:14px;background:#f5e283;text-align:center;letter-spacing:-0.097px;">3,0</div><div class="hl" style="left:0px;top:413px;width:674px;background:#8489c1"></div><div class="vl" style="left:73px;top:413px;height:15px;background:#8489c1"></div><div class="vl" style="left:136px;top:413px;height:15px;background:#8489c1"></div><div class="vl" style="left:208px;top:413px;height:15px;background:#8489c1"></div><div class="vl" style="left:418px;top:413px;height:15px;background:#8489c1"></div><div class="vl" style="left:523px;top:413px;height:15px;background:#8489c1"></div><div class="vl" style="left:607px;top:413px;height:15px;background:#8489c1"></div><div class="vl" style="left:673px;top:413px;height:15px;background:#8489c1"></div>
<div class="c" style="left:0px;top:429px;width:607px;height:14px;background:#f5a9a8;"></div><div class="c" style="left:209px;top:429px;width:209px;height:14px;background:transparent;padding-left:2px;letter-spacing:-0.021px;">Информатика и ИКТ</div><div class="c" style="left:419px;top:429px;width:104px;height:14px;background:transparent;text-align:center;letter-spacing:0.112px;">зачет</div><div class="c" style="left:524px;top:429px;width:83px;height:14px;background:transparent;text-align:center;letter-spacing:-0.024px;">26.12.2011</div><div class="c" style="left:608px;top:429px;width:65px;height:14px;background:#f5e283;text-align:center;letter-spacing:-0.097px;">3,0</div><div class="hl" style="left:0px;top:428px;width:674px;background:#8489c1"></div><div class="vl" style="left:73px;top:428px;height:15px;background:#8489c1"></div><div class="vl" style="left:136px;top:428px;height:15px;background:#8489c1"></div><div class="vl" style="left:208px;top:428px;height:15px;background:#8489c1"></div><div class="vl" style="left:418px;top:428px;height:15px;background:#8489c1"></div><div class="vl" style="left:523px;top:428px;height:15px;background:#8489c1"></div><div class="vl" style="left:607px;top:428px;height:15px;background:#8489c1"></div><div class="vl" style="left:673px;top:428px;height:15px;background:#8489c1"></div>
<div class="c" style="left:0px;top:444px;width:607px;height:14px;background:#f5a9a8;"></div><div class="c" style="left:209px;top:444px;width:209px;height:14px;background:transparent;padding-left:2px;letter-spacing:0.080px;">Физическая культура</div><div class="c" style="left:419px;top:444px;width:104px;height:14px;background:transparent;text-align:center;letter-spacing:0.112px;">зачет</div><div class="c" style="left:524px;top:444px;width:83px;height:14px;background:transparent;text-align:center;letter-spacing:-0.024px;">12.01.2011</div><div class="c" style="left:608px;top:444px;width:65px;height:14px;background:#a6cfff;text-align:center;letter-spacing:-0.097px;">4,0</div><div class="hl" style="left:0px;top:443px;width:674px;background:#8489c1"></div><div class="vl" style="left:73px;top:443px;height:15px;background:#8489c1"></div><div class="vl" style="left:136px;top:443px;height:15px;background:#8489c1"></div><div class="vl" style="left:208px;top:443px;height:15px;background:#8489c1"></div><div class="vl" style="left:418px;top:443px;height:15px;background:#8489c1"></div><div class="vl" style="left:523px;top:443px;height:15px;background:#8489c1"></div><div class="vl" style="left:607px;top:443px;height:15px;background:#8489c1"></div><div class="vl" style="left:673px;top:443px;height:15px;background:#8489c1"></div>
<div class="c" style="left:0px;top:459px;width:607px;height:14px;background:#f47c7b;"></div><div class="c" style="left:209px;top:459px;width:209px;height:14px;background:transparent;padding-left:2px;letter-spacing:0.001px;">Математика</div><div class="c" style="left:419px;top:459px;width:104px;height:14px;background:transparent;text-align:center;letter-spacing:0.076px;">экзамен</div><div class="c" style="left:524px;top:459px;width:83px;height:14px;background:transparent;text-align:center;letter-spacing:-0.024px;">13.01.2011</div><div class="c" style="left:608px;top:459px;width:65px;height:14px;background:#f5e283;text-align:center;letter-spacing:-0.097px;">3,0</div><div class="hl" style="left:0px;top:458px;width:674px;background:#8489c1"></div><div class="vl" style="left:73px;top:458px;height:15px;background:#8489c1"></div><div class="vl" style="left:136px;top:458px;height:15px;background:#8489c1"></div><div class="vl" style="left:208px;top:458px;height:15px;background:#8489c1"></div><div class="vl" style="left:418px;top:458px;height:15px;background:#8489c1"></div><div class="vl" style="left:523px;top:458px;height:15px;background:#8489c1"></div><div class="vl" style="left:607px;top:458px;height:15px;background:#8489c1"></div><div class="vl" style="left:673px;top:458px;height:15px;background:#8489c1"></div>
<div class="c" style="left:0px;top:474px;width:607px;height:14px;background:#f47c7b;"></div><div class="c" style="left:209px;top:474px;width:209px;height:14px;background:transparent;padding-left:2px;letter-spacing:-0.145px;">Физика</div><div class="c" style="left:419px;top:474px;width:104px;height:14px;background:transparent;text-align:center;letter-spacing:0.076px;">экзамен</div><div class="c" style="left:524px;top:474px;width:83px;height:14px;background:transparent;text-align:center;letter-spacing:-0.024px;">16.01.2011</div><div class="c" style="left:608px;top:474px;width:65px;height:14px;background:#f5e283;text-align:center;letter-spacing:-0.097px;">3,0</div><div class="hl" style="left:0px;top:473px;width:674px;background:#8489c1"></div><div class="vl" style="left:73px;top:473px;height:15px;background:#8489c1"></div><div class="vl" style="left:136px;top:473px;height:15px;background:#8489c1"></div><div class="vl" style="left:208px;top:473px;height:15px;background:#8489c1"></div><div class="vl" style="left:418px;top:473px;height:15px;background:#8489c1"></div><div class="vl" style="left:523px;top:473px;height:15px;background:#8489c1"></div><div class="vl" style="left:607px;top:473px;height:15px;background:#8489c1"></div><div class="vl" style="left:673px;top:473px;height:15px;background:#8489c1"></div>
<div class="c" style="left:0px;top:489px;width:607px;height:14px;background:#f47c7b;"></div><div class="c" style="left:209px;top:489px;width:209px;height:14px;background:transparent;padding-left:2px;letter-spacing:0.118px;">Русский язык</div><div class="c" style="left:419px;top:489px;width:104px;height:14px;background:transparent;text-align:center;letter-spacing:0.076px;">экзамен</div><div class="c" style="left:524px;top:489px;width:83px;height:14px;background:transparent;text-align:center;letter-spacing:-0.024px;">19.01.2011</div><div class="c" style="left:608px;top:489px;width:65px;height:14px;background:#f5e283;text-align:center;letter-spacing:-0.097px;">3,0</div><div class="hl" style="left:0px;top:488px;width:674px;background:#8489c1"></div><div class="vl" style="left:73px;top:488px;height:15px;background:#8489c1"></div><div class="vl" style="left:136px;top:488px;height:15px;background:#8489c1"></div><div class="vl" style="left:208px;top:488px;height:15px;background:#8489c1"></div><div class="vl" style="left:418px;top:488px;height:15px;background:#8489c1"></div><div class="vl" style="left:523px;top:488px;height:15px;background:#8489c1"></div><div class="vl" style="left:607px;top:488px;height:15px;background:#8489c1"></div><div class="vl" style="left:673px;top:488px;height:15px;background:#8489c1"></div>
<div class="c" style="left:0px;top:504px;width:607px;height:14px;background:#efffff;"></div><div class="c" style="left:74px;top:505px;width:200px;height:13px;background:transparent;font-weight:bold;font-size:13px;color:#1f4e9c;padding-left:3.5px;letter-spacing:-0.509px">4 ПКС</div><div class="c" style="left:608px;top:504px;width:65px;height:14px;background:#efffff;text-align:center;letter-spacing:-0.097px;">3,2</div><div class="hl" style="left:0px;top:503px;width:674px;background:#8489c1"></div><div class="vl" style="left:73px;top:503px;height:15px;background:#8489c1"></div><div class="vl" style="left:607px;top:503px;height:15px;background:#8489c1"></div><div class="vl" style="left:673px;top:503px;height:15px;background:#8489c1"></div>
<div class="c" style="left:0px;top:519px;width:607px;height:14px;background:#fff;"></div><div class="c" style="left:137px;top:520px;width:200px;height:13px;background:transparent;font-weight:bold;font-size:13px;color:#1f4e9c;padding-left:3.5px;letter-spacing:-0.381px">8 семестр</div><div class="c" style="left:608px;top:519px;width:65px;height:14px;background:#fff;text-align:center;letter-spacing:-0.097px;">3,2</div><div class="hl" style="left:0px;top:518px;width:674px;background:#8489c1"></div><div class="vl" style="left:73px;top:518px;height:15px;background:#8489c1"></div><div class="vl" style="left:136px;top:518px;height:15px;background:#8489c1"></div><div class="vl" style="left:607px;top:518px;height:15px;background:#8489c1"></div><div class="vl" style="left:673px;top:518px;height:15px;background:#8489c1"></div>
<div class="c" style="left:0px;top:534px;width:607px;height:28px;background:#fff;"></div><div class="c" style="left:209px;top:534px;width:209px;height:28px;background:transparent;padding-left:2px;letter-spacing:-0.064px;">МДК 02.02 Технология разработки и<br>защиты БД</div><div class="c" style="left:419px;top:534px;width:104px;height:28px;background:transparent;text-align:center;letter-spacing:0.091px;">устный опрос</div><div class="c" style="left:524px;top:534px;width:83px;height:28px;background:transparent;text-align:center;letter-spacing:-0.105px;">23.01.2015</div><div class="c" style="left:608px;top:534px;width:65px;height:28px;background:#f5e283;text-align:center;letter-spacing:-0.097px;">3,0</div><div class="hl" style="left:0px;top:533px;width:674px;background:#8489c1"></div><div class="vl" style="left:73px;top:533px;height:29px;background:#8489c1"></div><div class="vl" style="left:136px;top:533px;height:29px;background:#8489c1"></div><div class="vl" style="left:208px;top:533px;height:29px;background:#8489c1"></div><div class="vl" style="left:418px;top:533px;height:29px;background:#8489c1"></div><div class="vl" style="left:523px;top:533px;height:29px;background:#8489c1"></div><div class="vl" style="left:607px;top:533px;height:29px;background:#8489c1"></div><div class="vl" style="left:673px;top:533px;height:29px;background:#8489c1"></div>
<div class="c" style="left:0px;top:563px;width:607px;height:28px;background:#fff;"></div><div class="c" style="left:209px;top:563px;width:209px;height:28px;background:transparent;padding-left:2px;letter-spacing:0.008px;">МДК 02.01 Инфокоммуникац. системы<br>и сети</div><div class="c" style="left:419px;top:563px;width:104px;height:28px;background:transparent;text-align:center;letter-spacing:-0.090px;">домашнее задание</div><div class="c" style="left:524px;top:563px;width:83px;height:28px;background:transparent;text-align:center;letter-spacing:-0.105px;">23.01.2015</div><div class="c" style="left:608px;top:563px;width:65px;height:28px;background:#f5e283;text-align:center;letter-spacing:-0.097px;">3,0</div><div class="hl" style="left:0px;top:562px;width:674px;background:#8489c1"></div><div class="vl" style="left:73px;top:562px;height:29px;background:#8489c1"></div><div class="vl" style="left:136px;top:562px;height:29px;background:#8489c1"></div><div class="vl" style="left:208px;top:562px;height:29px;background:#8489c1"></div><div class="vl" style="left:418px;top:562px;height:29px;background:#8489c1"></div><div class="vl" style="left:523px;top:562px;height:29px;background:#8489c1"></div><div class="vl" style="left:607px;top:562px;height:29px;background:#8489c1"></div><div class="vl" style="left:673px;top:562px;height:29px;background:#8489c1"></div>
<div class="c" style="left:0px;top:592px;width:607px;height:14px;background:#fff;"></div><div class="c" style="left:209px;top:592px;width:209px;height:14px;background:transparent;padding-left:2px;letter-spacing:-0.029px;">МДК 03.01 Технология разработки ПО</div><div class="c" style="left:419px;top:592px;width:104px;height:14px;background:transparent;text-align:center;letter-spacing:0.091px;">устный опрос</div><div class="c" style="left:524px;top:592px;width:83px;height:14px;background:transparent;text-align:center;letter-spacing:-0.105px;">23.01.2015</div><div class="c" style="left:608px;top:592px;width:65px;height:14px;background:#f5e283;text-align:center;letter-spacing:-0.097px;">3,0</div><div class="hl" style="left:0px;top:591px;width:674px;background:#8489c1"></div><div class="vl" style="left:73px;top:591px;height:15px;background:#8489c1"></div><div class="vl" style="left:136px;top:591px;height:15px;background:#8489c1"></div><div class="vl" style="left:208px;top:591px;height:15px;background:#8489c1"></div><div class="vl" style="left:418px;top:591px;height:15px;background:#8489c1"></div><div class="vl" style="left:523px;top:591px;height:15px;background:#8489c1"></div><div class="vl" style="left:607px;top:591px;height:15px;background:#8489c1"></div><div class="vl" style="left:673px;top:591px;height:15px;background:#8489c1"></div>
<div class="c" style="left:0px;top:607px;width:607px;height:14px;background:#fff;"></div><div class="c" style="left:209px;top:607px;width:209px;height:14px;background:transparent;padding-left:2px;letter-spacing:-0.133px;">МДК 02.03 Инженерия</div><div class="c" style="left:419px;top:607px;width:104px;height:14px;background:transparent;text-align:center;letter-spacing:0.091px;">устный опрос</div><div class="c" style="left:524px;top:607px;width:83px;height:14px;background:transparent;text-align:center;letter-spacing:-0.105px;">23.01.2015</div><div class="c" style="left:608px;top:607px;width:65px;height:14px;background:#f5e283;text-align:center;letter-spacing:-0.097px;">3,0</div><div class="hl" style="left:0px;top:606px;width:674px;background:#8489c1"></div><div class="vl" style="left:73px;top:606px;height:15px;background:#8489c1"></div><div class="vl" style="left:136px;top:606px;height:15px;background:#8489c1"></div><div class="vl" style="left:208px;top:606px;height:15px;background:#8489c1"></div><div class="vl" style="left:418px;top:606px;height:15px;background:#8489c1"></div><div class="vl" style="left:523px;top:606px;height:15px;background:#8489c1"></div><div class="vl" style="left:607px;top:606px;height:15px;background:#8489c1"></div><div class="vl" style="left:673px;top:606px;height:15px;background:#8489c1"></div>
</div>
<!-- outline tree -->
<div class="gl" style="left:26px;top:277px;width:1px;height:16px"></div><div class="gl" style="left:26px;top:292px;width:5px;height:1px"></div><div class="mb" style="left:21px;top:266px"></div><div class="gl" style="left:26px;top:352px;width:1px;height:597px"></div><div class="mb" style="left:21px;top:341px"></div><div class="gl" style="left:39px;top:367px;width:1px;height:475px"></div><div class="gl" style="left:39px;top:841px;width:5px;height:1px"></div><div class="mb" style="left:34px;top:356px"></div><div class="gl" style="left:52px;top:382px;width:1px;height:460px"></div><div class="gl" style="left:52px;top:841px;width:5px;height:1px"></div><div class="mb" style="left:47px;top:371px"></div><div class="gl" style="left:39px;top:854px;width:1px;height:95px"></div><div class="mb" style="left:34px;top:844px"></div><div class="gl" style="left:52px;top:869px;width:1px;height:80px"></div><div class="mb" style="left:47px;top:859px"></div>
<!-- scrollbars -->
<div class="a" style="left:1242px;top:220px;width:17px;height:729px;border-left:1px solid #b8b08c;border-right:1px solid #b8b08c;background:#fbfaf3"></div>
<div class="a" style="left:1243px;top:220px;width:15px;height:21px;border-bottom:1px solid #b8b08c;background:linear-gradient(90deg,#fbf9ec,#efebd4)"></div>
<svg class="a" style="left:1246.5px;top:226px" width="8" height="7" viewBox="0 0 8 7"><path d="M4 0 L8 7 H0 Z" fill="#d2cfc4"/></svg>
<div class="a" style="left:1243px;top:241px;width:15px;height:544px;border-bottom:1px solid #b8b08c;background:linear-gradient(90deg,#fcfaee,#f3edcf 50%,#e6dfb9)"></div>
<div class="a" style="left:1248px;top:510px;width:5px;height:5px;border-radius:3px;background:#d9d4bb"></div>
<div class="a" style="left:1243px;top:928px;width:15px;height:21px;border-top:1px solid #b8b08c;background:linear-gradient(90deg,#fbf9ec,#efebd4)"></div>
<svg class="a" style="left:1246.5px;top:936px" width="8" height="7" viewBox="0 0 8 7"><path d="M0 0 H8 L4 7 Z" fill="#8d8d8d"/></svg>
<div class="a" style="left:18px;top:949px;width:1240px;height:17px;border-top:1px solid #b8b08c;border-bottom:1px solid #b8b08c;background:#fbfaf3"></div>
<div class="a" style="left:18px;top:950px;width:1065px;height:15px;border-right:1px solid #b8b08c;background:linear-gradient(#fbf7e4,#f1ebcd 50%,#e3dcb6)"></div>
<div class="a" style="left:557px;top:955px;width:5px;height:5px;border-radius:3px;background:#d9d4bb"></div>
<div class="a" style="left:1221px;top:950px;width:21px;height:15px;border-left:1px solid #b8b08c;background:linear-gradient(#fbf9ec,#efebd4)"></div>
<svg class="a" style="left:1229px;top:954px" width="7" height="7" viewBox="0 0 7 7"><path d="M0 0 L7 3.5 L0 7 Z" fill="#8d8d8d"/></svg>
<div class="a" style="left:1242px;top:950px;width:17px;height:15px;border-left:1px solid #b8b08c;border-right:1px solid #b8b08c;background:#fbfaf3"></div>
<!-- status popup -->
<div class="a" style="left:0;top:946px;width:196px;height:34px;border:1px solid #a9a594;border-radius:6px 6px 0 0;background:linear-gradient(90deg,#f4eed5,#f8f2dc 60%,#fbf8e8)"></div>
<svg class="a" style="left:3.5px;top:950.5px" width="14" height="14" viewBox="0 0 14 14"><defs><linearGradient id="mn" x1="0" y1="0" x2="0" y2="1"><stop offset="0" stop-color="#3b7aa4"/><stop offset="0.3" stop-color="#a4cbe4"/><stop offset="0.6" stop-color="#4a8ebc"/><stop offset="1" stop-color="#2c74a4"/></linearGradient></defs><g transform="translate(5.4,0.4)"><rect x="0" y="0" width="7.8" height="6.8" rx="0.7" fill="#b8c0c8"/><rect x="0.5" y="0.2" width="6.8" height="5.9" fill="url(#mn)"/><rect x="0.3" y="0" width="7.2" height="1" fill="#274a60"/><rect x="3" y="6.8" width="1.8" height="1.3" fill="#7d848b"/><rect x="1.2" y="8.1" width="5.4" height="0.9" rx="0.4" fill="#9aa0a6"/></g><rect x="-0.2" y="3.9" width="8.5" height="7.2" rx="1" fill="#f4eed6"/><g transform="translate(0.2,4.3)"><rect x="0" y="0" width="7.8" height="6.8" rx="0.7" fill="#b8c0c8"/><rect x="0.5" y="0.2" width="6.8" height="5.9" fill="url(#mn)"/><rect x="0.3" y="0" width="7.2" height="1" fill="#274a60"/><rect x="3" y="6.8" width="1.8" height="1.3" fill="#7d848b"/><rect x="1.2" y="8.1" width="5.4" height="0.9" rx="0.4" fill="#9aa0a6"/></g></svg>
<div class="t" style="left:19.8px;top:951px;font-size:12px;line-height:14px;color:#262626;letter-spacing:-0.449px;">Текущие вызовы: 0</div>
<div class="t" style="left:19.8px;top:964px;font-size:12px;line-height:14px;color:#262626;letter-spacing:-0.525px;">Накопленные вызовы: 70</div>
<svg class="a" style="left:177.5px;top:955px" width="10" height="10" viewBox="0 0 10 10"><path d="M1 1 L9 9 M9 1 L1 9" stroke="#bb8a3e" stroke-width="2.2"/></svg>
</body></html>
